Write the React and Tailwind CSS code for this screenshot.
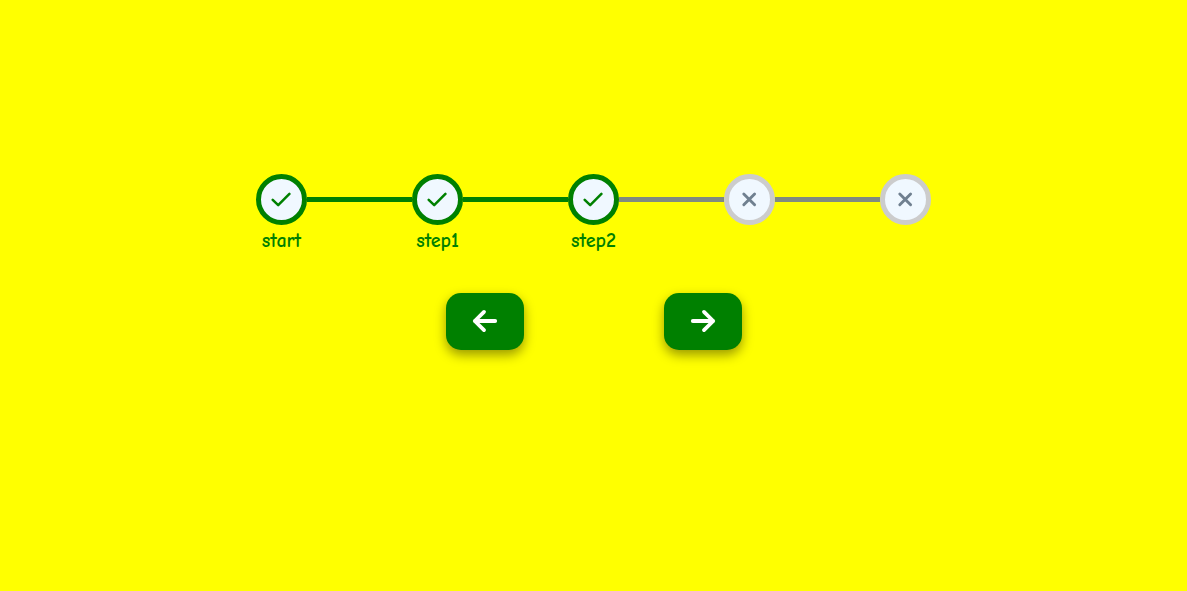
import { Fragment, useState } from "react";

const steps = ["start", "step1", "step2", "step3", "final"];

function CheckIcon() {
  return (
    <svg viewBox="0 0 21 21" className="size-[21px]" fill="none" stroke="#008000" strokeWidth="2.5" strokeLinecap="round" strokeLinejoin="round" aria-hidden="true">
      <path d="M1.7 10.8 7.2 16.2 18.4 4.9" />
    </svg>
  );
}

function CrossIcon() {
  return (
    <svg viewBox="0 0 21 21" className="size-[21px]" fill="none" stroke="#708090" strokeWidth="2.9" strokeLinecap="round" aria-hidden="true">
      <path d="M4.8 5 15.6 15.8M15.6 5 4.8 15.8" />
    </svg>
  );
}

function ArrowIcon({ className }) {
  return (
    <svg viewBox="0 0 26 26" className={className} fill="none" stroke="white" strokeWidth="3.8" strokeLinecap="round" strokeLinejoin="round" aria-hidden="true">
      <path d="M23.2 13H2.8M12 3.9 2.8 13l9.2 9.1" />
    </svg>
  );
}

export default function App() {
  const [done, setDone] = useState(3);
  const button =
    "flex h-[57px] w-[78px] items-center justify-center rounded-[15px] bg-[#008000] pb-0.5 shadow-[0_5px_12px_rgba(0,0,0,0.4)]";

  return (
    <main className="flex min-h-screen flex-col items-center bg-[#ffff00] px-4 pt-[174px] font-['Comic_Sans_MS','Comic_Neue','Open_Sans',sans-serif]">
      <div className="flex w-full max-w-[675px] items-start">
        {steps.map((name, i) => {
          const complete = i < done;
          return (
            <Fragment key={name}>
              {i > 0 && (
                <div className={`mt-[23px] h-[5px] flex-1 ${complete ? "bg-[#008000]" : "bg-[#808b80]"}`} />
              )}
              <div className="flex w-[51px] flex-col items-center">
                <div
                  className={`flex size-[51px] items-center justify-center rounded-full border-[5px] bg-[#f0f8ff] ${
                    complete ? "border-[#008000]" : "border-[#cccccc]"
                  }`}
                >
                  {complete ? <CheckIcon /> : <CrossIcon />}
                </div>
                <div className="mt-1 h-6 text-xl leading-6 font-bold whitespace-nowrap text-[#008000]">
                  {complete ? name : null}
                </div>
              </div>
            </Fragment>
          );
        })}
      </div>
      <div className="mt-10 flex gap-[140px]">
        <button type="button" aria-label="Previous" className={button} onClick={() => setDone(Math.max(1, done - 1))}>
          <ArrowIcon className="size-[26px]" />
        </button>
        <button type="button" aria-label="Next" className={button} onClick={() => setDone(Math.min(steps.length, done + 1))}>
          <ArrowIcon className="size-[26px] rotate-180" />
        </button>
      </div>
    </main>
  );
}
